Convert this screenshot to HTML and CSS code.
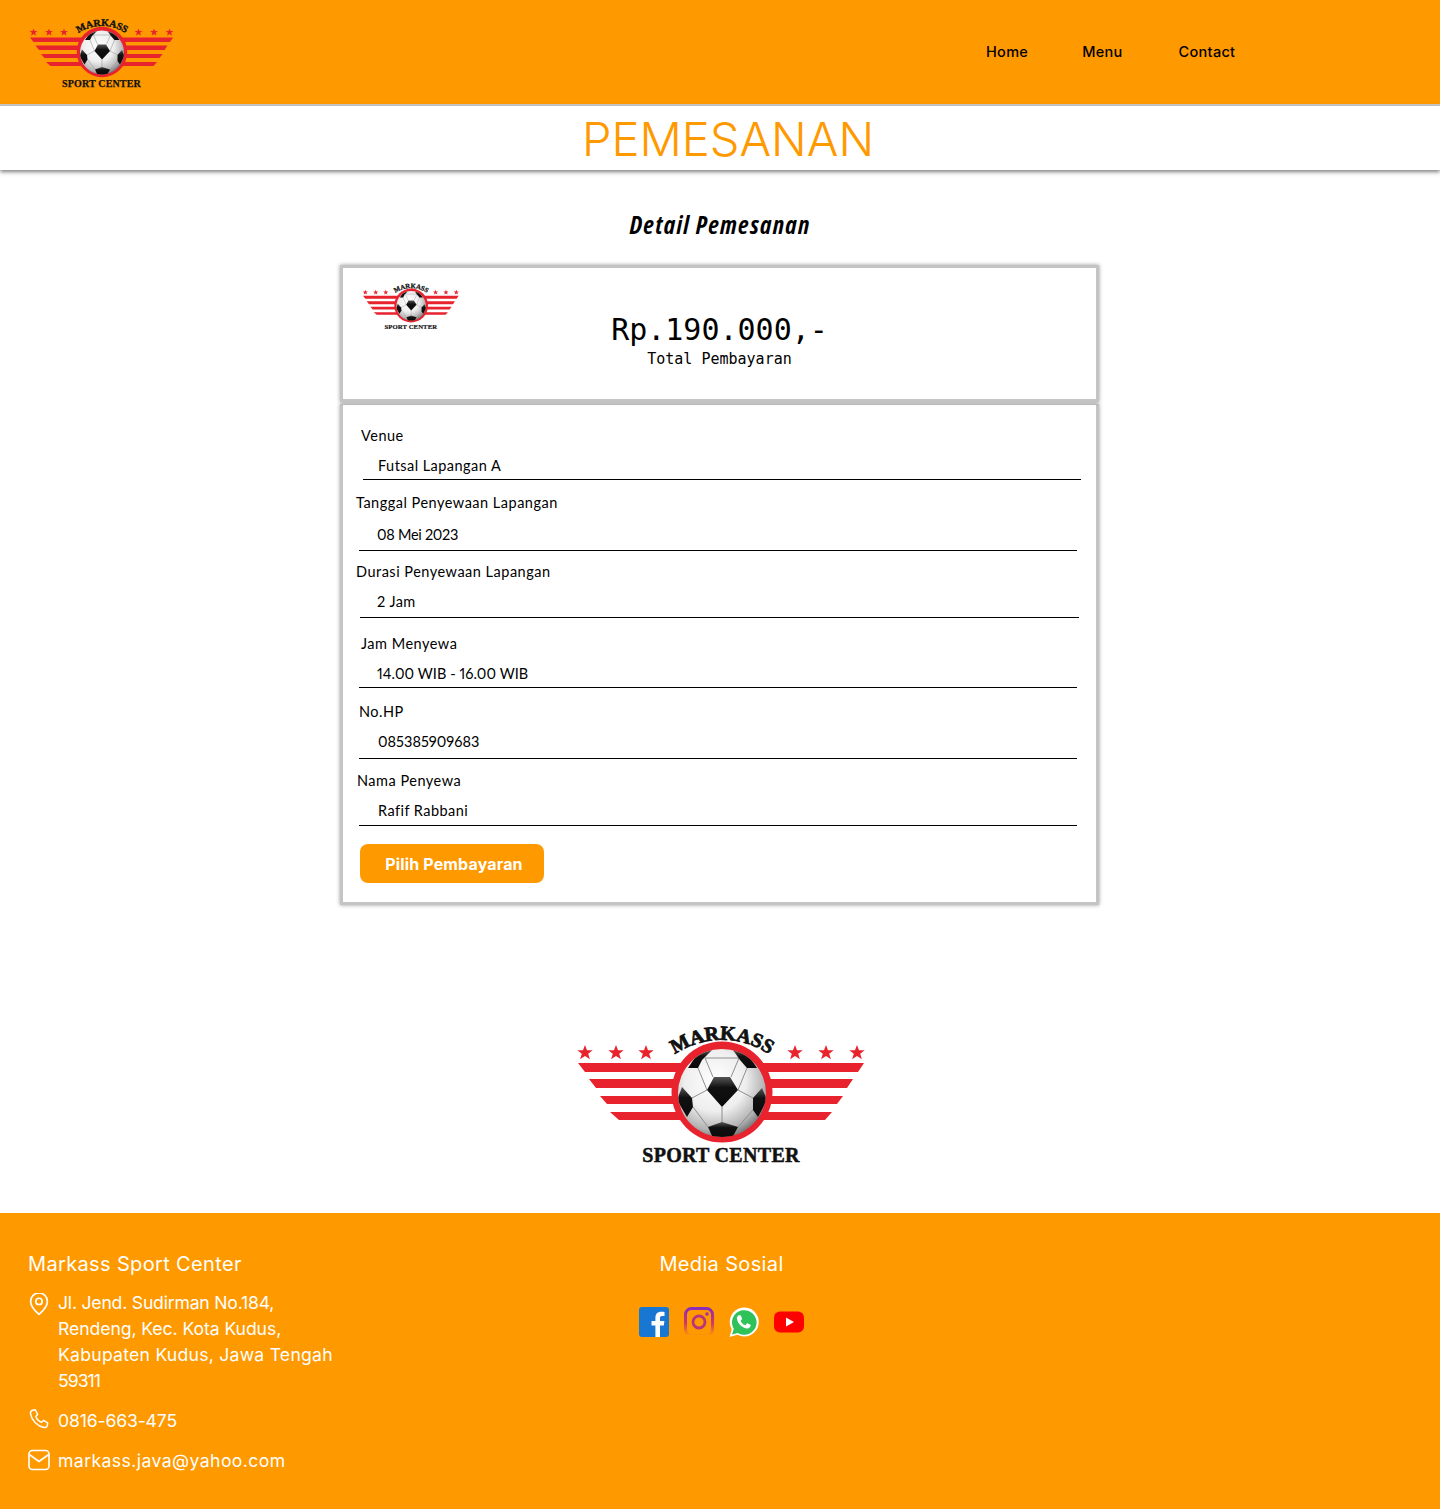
FILE: index.html
```html
<!DOCTYPE html>
<html lang="id">
<head>
<meta charset="utf-8">
<title>Pemesanan</title>
<link rel="stylesheet" href="styles.css">
</head>
<body>
<svg class="defs" width="0" height="0" aria-hidden="true">
  <defs>
    <radialGradient id="ballGrad" cx="42%" cy="36%" r="70%">
      <stop offset="0" stop-color="#ffffff"/>
      <stop offset=".5" stop-color="#eeeeee"/>
      <stop offset=".8" stop-color="#b4b4b4"/>
      <stop offset="1" stop-color="#5f5f5f"/>
    </radialGradient>
    <linearGradient id="patchGrad" x1="0" y1="0" x2="0" y2="1">
      <stop offset="0" stop-color="#555"/>
      <stop offset=".35" stop-color="#111"/>
      <stop offset="1" stop-color="#0a0a0a"/>
    </linearGradient>
    <clipPath id="ballClip"><circle cx="162" cy="83" r="44"/></clipPath>
    <path id="arcText" d="M110 48 A84 84 0 0 1 214 48"/>
    <symbol id="logo" viewBox="0 0 320 170">
      <g fill="#e8232e">
        <path id="star" d="M25 35l2 5.200h5.700l-4.500 3.500 1.700 5.600-4.900-3.300-4.900 3.300 1.700-5.600-4.500-3.500H23z"/>
        <use href="#star" x="31"/><use href="#star" x="61"/>
        <use href="#star" x="210"/><use href="#star" x="241"/><use href="#star" x="272"/>
        <path d="M18 53H304L298 62H25zM29 69H293L287 78H36zM40 86H283L277 94H47zM50 102H272L265 110H59z"/>
        <circle cx="162" cy="82" r="50.500"/>
      </g>
      <circle cx="162" cy="83" r="44" fill="url(#ballGrad)"/>
      <g clip-path="url(#ballClip)">
        <g fill="none" stroke="#8f8f8f" stroke-width="1">
          <path d="M153 67L145 48H179L171 67M138 58L147 80M187 58L178 80M147 80L132 88M178 80L193 88M162 97V113M133 97L148 117M193 100L178 117"/>
        </g>
        <g fill="url(#patchGrad)">
          <path d="M154 67H170L178 80L162 97L147 80z"/>
          <path d="M128 58L140 40H152L142 50L138 58z"/>
          <path d="M173 40H185L197 58H187L180 50z"/>
          <path d="M117 90L122 77L132 88L133 97L127 107z"/>
          <path d="M207 90L202 78L193 88L193 100L198 107z"/>
          <path d="M148 117L162 112L178 117L172 128H153z"/>
        </g>
      </g>
      <text class="logo-arc"><textPath href="#arcText" startOffset="50%" text-anchor="middle">MARKASS</textPath></text>
      <text class="logo-sub" x="161" y="152" text-anchor="middle">SPORT CENTER</text>
    </symbol>
  </defs>
</svg>

<header class="topbar">
  <svg class="logo-top"><use href="#logo"/></svg>
  <nav class="nav">
    <a>Home</a><a>Menu</a><a>Contact</a>
  </nav>
</header>

<div class="titleband"><h1>PEMESANAN</h1></div>

<main class="content">
  <h2 class="detail">Detail Pemesanan</h2>

  <section class="card card-total">
    <svg class="logo-card"><use href="#logo"/></svg>
    <div class="total">
      <div class="amount">Rp.190.000,-</div>
      <div class="amount-label">Total Pembayaran</div>
    </div>
  </section>

  <section class="card card-form">
    <div class="field f1"><label>Venue</label><div class="value">Futsal Lapangan A</div></div>
    <div class="field f2"><label>Tanggal Penyewaan Lapangan</label><div class="value">08 Mei 2023</div></div>
    <div class="field f3"><label>Durasi Penyewaan Lapangan</label><div class="value">2 Jam</div></div>
    <div class="field f4"><label>Jam Menyewa</label><div class="value">14.00 WIB - 16.00 WIB</div></div>
    <div class="field f5"><label>No.HP</label><div class="value">085385909683</div></div>
    <div class="field f6"><label>Nama Penyewa</label><div class="value">Rafif Rabbani</div></div>
    <button class="pay">Pilih Pembayaran</button>
  </section>

  <div class="bigbrand"><svg class="logo-big"><use href="#logo"/></svg></div>
</main>

<footer class="footer">
  <div class="contact">
    <h3>Markass Sport Center</h3>
    <div class="line addr">
      <svg class="ico ico-pin" viewBox="2 1 20 21"><path d="M12 21.500s8-7.200 8-12.500a8 8 0 0 0-16 0c0 5.300 8 12.500 8 12.500z"/><circle cx="12" cy="9" r="3"/></svg>
      <p><span class="a1">Jl. Jend. Sudirman No.184,</span><br><span class="a2">Rendeng, Kec. Kota Kudus,</span><br>Kabupaten Kudus, Jawa Tengah<br><span class="a4">59311</span></p>
    </div>
    <div class="line phone">
      <svg class="ico" viewBox="0 0 24 24"><path d="M5 2.500L8 2l2.500 5-2 2.200c1 2.800 3.300 5.300 6.300 6.300l2.200-2 4.500 2.700-.5 3.300c-.3 1.500-2 2-3.500 1.800C10.500 20 4 13.500 2.700 6.500 2.500 4.500 3.500 2.800 5 2.500z"/></svg>
      <p>0816-663-475</p>
    </div>
    <div class="line mail">
      <svg class="ico ico-mail" viewBox="1 1.500 22 21"><rect x="2" y="2.500" width="20" height="19" rx="3.500"/><path d="M3 7l9 6.500L21 7"/></svg>
      <p>markass.java@yahoo.com</p>
    </div>
  </div>
  <div class="social">
    <h3>Media Sosial</h3>
    <div class="social-icons">
      <svg viewBox="0 0 30 30"><rect width="30" height="30" rx="3" fill="#1877d2"/><path fill="#fff" d="M21 30V18.500h3.800l.6-4.500H21v-2.800c0-1.300.4-2.200 2.200-2.200h2.300V5c-.4 0-1.800-.2-3.400-.2-3.400 0-5.700 2.100-5.700 5.900V14h-3.900v4.500h3.900V30z"/></svg>
      <svg viewBox="0 0 30 30"><defs><linearGradient id="ig" x1="0" y1="0" x2="0" y2="1"><stop offset="0" stop-color="#8a2bb9"/><stop offset=".55" stop-color="#d1386c"/><stop offset="1" stop-color="#ff9900"/></linearGradient></defs><rect x="1.500" y="1.500" width="27" height="27" rx="6" fill="none" stroke="url(#ig)" stroke-width="3"/><circle cx="15" cy="15" r="6" fill="none" stroke="#b9337e" stroke-width="2.800"/><circle cx="23" cy="7" r="1.800" fill="#a6309a"/></svg>
      <svg viewBox="0 0 30 30"><path fill="#fff" d="M.5 30l2.200-7.700A14.500 14.500 0 1 1 8.400 27.800z"/><path fill="#2fc25b" d="M3 27.500l1.800-5.600a12.300 12.300 0 1 1 4 4z"/><path fill="#fff" d="M10.700 8.200c.5 0 1 0 1.300.8l1 2.500c.1.400 0 .8-.2 1l-.9 1.100c-.2.300-.2.500 0 .8 1 1.700 2.300 2.900 4.100 3.700.3.100.5.100.7-.2l1.100-1.300c.3-.3.600-.3.900-.2l2.400 1.200c.4.200.6.400.6.700 0 1.900-1.500 3.300-3.600 3.300-4.300 0-10-5.300-10.200-10 0-1.600.7-2.900 1.800-3.400.3-.1.600 0 1-.1z"/></svg>
      <svg viewBox="0 0 30 30"><rect y="4.500" width="30" height="21" rx="6" fill="#ff0000"/><path fill="#fff" d="M12 10.500L20 15l-8 4.500z"/></svg>
    </div>
  </div>
</footer>
</body>
</html>
```

FILE: styles.css
```css
* { box-sizing: border-box; }
html, body { margin: 0; padding: 0; }
body { width: 1440px; height: 1509px; background: #fff; color: #000; font-family: Inter, "Noto Sans", sans-serif; overflow: hidden; }
.defs { display: block; height: 0; }

.topbar { height: 106px; background: #ff9900; border-bottom: 2px solid #c9c9c9; display: flex; align-items: flex-start; position: relative; }
.logo-top { width: 160px; height: 85px; margin: 11px 0 0 21px; }
.nav { display: flex; margin-left: 805px; padding-top: 43px; font-size: 14.500px; font-weight: 500; line-height: 17px; letter-spacing: .3px; }
.nav a:nth-child(2) { margin-left: 54px; }
.nav a:nth-child(3) { margin-left: 56px; }

.titleband { height: 64px; background: #fff; box-shadow: 0 2px 4px rgba(0,0,0,.5); display: flex; justify-content: center; padding-left: 16px; position: relative; }
.titleband h1 { margin: 0; font-size: 47px; font-weight: 300; color: #ff9900; line-height: 66px; height: 64px; }

.content { display: flex; flex-direction: column; align-items: center; }
.detail { margin: 39px 0 26px; font-family: "Open Sans", "Liberation Sans", sans-serif; font-stretch: 75%; font-style: italic; font-weight: 700; font-size: 25px; line-height: 30px; letter-spacing: 1.300px; }

.card { width: 759px; background: #fff; border: 3px solid #c4c4c4; box-shadow: 0 0 4px rgba(0,0,0,.4); margin-left: -1px; }
.card-total { height: 137px; position: relative; display: flex; justify-content: center; }
.logo-card { position: absolute; left: 14px; top: 10px; width: 107px; height: 57px; }
.total { text-align: center; font-family: "DejaVu Sans Mono", "Liberation Mono", monospace; padding-top: 42px; }
.amount { font-size: 30px; line-height: 39px; }
.amount-label { font-size: 15px; line-height: 20px; }

.card-form { height: 501px; margin-top: 2px; border-top-width: 1px; font-family: Lato, "Noto Sans", sans-serif; font-size: 14.500px; letter-spacing: .5px; font-variant-numeric: proportional-nums; padding-top: 21px; }
.field label { display: block; line-height: 20px; }
.value { line-height: 20px; border-bottom: 1px solid #000; padding-bottom: 3px; margin-top: 10px; letter-spacing: .45px; }
.f1 { margin: 0 15px 0 18px; }
.f1 .value { margin-left: 2px; padding-left: 15px; }
.f2 { margin: 13px 19px 0 13px; }
.f2 .value { margin: 12px 0 0 3px; padding-left: 18px; padding-bottom: 5px; letter-spacing: -.28px; }
.f3 { margin: 11px 17px 0 13px; }
.f3 .value { margin: 10px 0 0 4px; padding-left: 17px; padding-bottom: 5px; }
.f4 { margin: 16px 19px 0 18px; }
.f4 .value { margin-left: -2px; padding-left: 18px; letter-spacing: .07px; }
.f5 { margin: 14px 19px 0 16px; }
.f5 .value { padding-left: 19px; padding-bottom: 6px; letter-spacing: .03px; }
.f6 { margin: 12px 19px 0 14px; }
.f6 .value { margin-left: 2px; padding-left: 19px; padding-bottom: 4px; }

.pay { display: block; margin: 18px 0 0 17px; width: 184px; height: 39px; border: 0; border-radius: 8px; padding: 0 0 0 4px; background: #ff9900; color: #fff; font-family: Inter, sans-serif; font-weight: 700; font-size: 16px; letter-spacing: .15px; }

.bigbrand { margin-top: 105px; height: 205px; display: flex; justify-content: center; }
.logo-big { width: 320px; height: 170px; }

.footer { position: absolute; left: 0; top: 1213px; width: 1440px; height: 296px; background: #ff9900; color: #fff; display: grid; grid-template-columns: 611px 165px; padding: 37px 0 0 28px; font-size: 17.600px; letter-spacing: .25px; }
.footer h3 { margin: 0; font-size: 20px; font-weight: 400; line-height: 28px; letter-spacing: .35px; }
.line { display: flex; gap: 8px; }
.line p { margin: 0; line-height: 26px; }
.a1 { letter-spacing: -.2px; }
.a2 { letter-spacing: -.07px; }
.a4 { letter-spacing: -.95px; }
.ico { width: 22px; height: 22px; fill: none; stroke: #fff; stroke-width: 1.600; stroke-linejoin: round; stroke-linecap: round; flex: none; }
.ico-pin { margin-top: 3px; }
.ico-mail { margin-top: 1px; }
.addr { margin-top: 12px; }
.phone { margin-top: 14px; letter-spacing: -.15px; }
.mail { margin-top: 14px; letter-spacing: .43px; }
.social h3 { text-align: center; }
.social-icons { display: flex; gap: 15px; margin-top: 29px; }
.social-icons svg { width: 30px; height: 30px; }

.logo-arc { font-family: "Liberation Serif", serif; font-weight: 700; font-size: 20px; fill: #111; stroke: #111; stroke-width: .8px; }
.logo-sub { font-family: "Liberation Serif", serif; font-weight: 700; font-size: 20px; fill: #111; stroke: #111; stroke-width: .5px; letter-spacing: .3px; }
```
